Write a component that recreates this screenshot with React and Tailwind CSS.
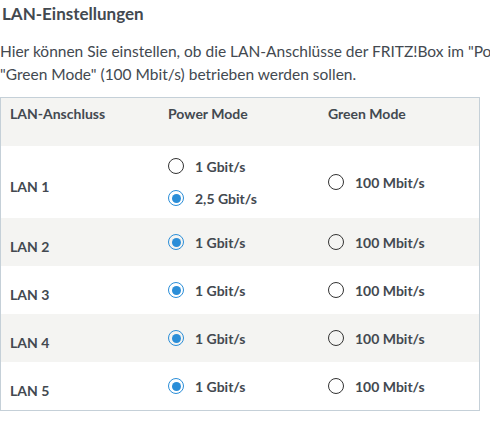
const ports = [
    { name: "LAN 1", power: "2,5", options: ["1 Gbit/s", "2,5 Gbit/s"] },
    { name: "LAN 2", power: "1", options: ["1 Gbit/s"] },
    { name: "LAN 3", power: "1", options: ["1 Gbit/s"] },
    { name: "LAN 4", power: "1", options: ["1 Gbit/s"] },
    { name: "LAN 5", power: "1", options: ["1 Gbit/s"] },
];

const Radio = ({ checked, label }) => (
    <div className="flex items-center gap-[11px] h-[20px]">
        {checked ? (
            <span className="w-[16px] h-[16px] rounded-full border-[1.5px] border-[#2b8ed8] flex items-center justify-center">
                <span className="w-[9px] h-[9px] rounded-full bg-[#2b8ed8]" />
            </span>
        ) : (
            <span className="w-[16px] h-[16px] rounded-full border-[1.5px] border-[#333333]" />
        )}
        <span className="text-[14px] font-bold">{label}</span>
    </div>
);

const App = () => {
    return (
        <div className="w-[490px] h-[430px] overflow-hidden bg-white text-[#434950]" style={{ fontFamily: "Lato, 'Liberation Sans', sans-serif" }}>
            <h1 className="pl-[2px] pt-[3px] text-[17px] font-bold leading-[22px]">LAN-Einstellungen</h1>

            <p className="mt-[15px] text-[15.5px] leading-[23px] whitespace-nowrap">
                Hier können Sie einstellen, ob die LAN-Anschlüsse der FRITZ!Box im "Power Mode" (1 Gbit/s bzw. 2,5 Gbit/s) oder im
                <br />
                "Green Mode" (100 Mbit/s) betrieben werden sollen.
            </p>

            <div className="mt-[11px] w-[480px] border border-[#c5d0d8]">
                <div className="h-[48px] grid grid-cols-[158px_160px_1fr] pl-[9px] pt-[5px] bg-[#f4f4f2] text-[14px] font-bold">
                    <div>LAN-Anschluss</div>
                    <div>Power Mode</div>
                    <div>Green Mode</div>
                </div>

                {ports.map((port, i) => (
                    <div
                        key={port.name}
                        className={`grid grid-cols-[158px_160px_1fr] items-center pl-[9px] ${port.options.length > 1 ? "h-[72px]" : "h-[48px]"} ${i % 2 === 1 ? "bg-[#f4f4f2]" : "bg-white"}`}
                    >
                        <div className="pt-[8px] text-[14px] font-bold">{port.name}</div>
                        <div className="flex flex-col gap-[12px]">
                            {port.options.map((opt) => (
                                <Radio key={opt} label={opt} checked={opt.startsWith(port.power + " ")} />
                            ))}
                        </div>
                        <div>
                            <Radio label="100 Mbit/s" checked={false} />
                        </div>
                    </div>
                ))}
            </div>
        </div>
    );
};

export default App;
